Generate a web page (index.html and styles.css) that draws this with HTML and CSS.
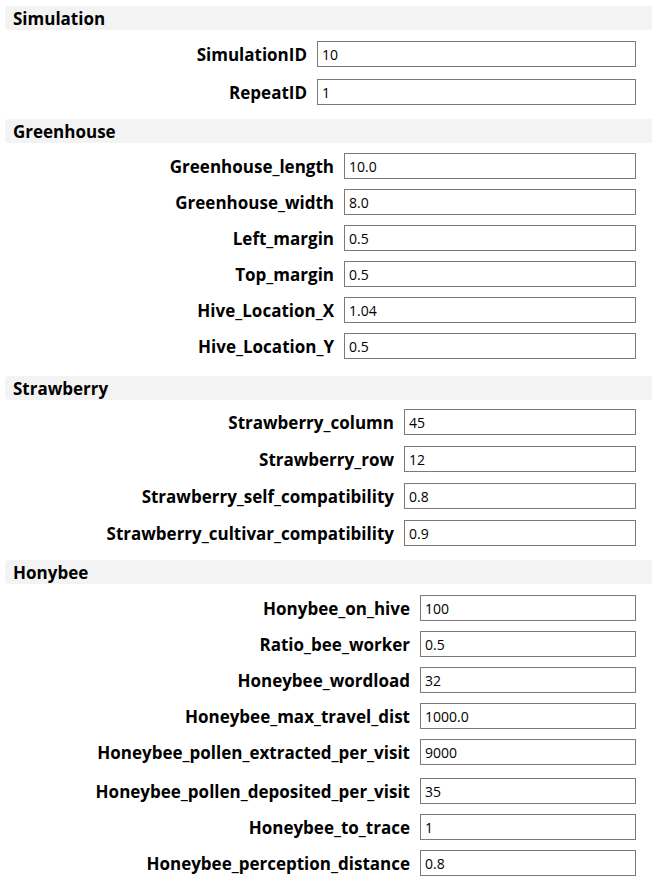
FILE: index.html
```html
<!DOCTYPE html>
<html>
<head>
<meta charset="utf-8">
<link rel="stylesheet" href="styles.css">
</head>
<body>
<div class="form">
  <section class="sec sec-sim">
    <div class="sec-head">Simulation</div>
    <div class="grid">
      <label class="lbl">SimulationID</label><input class="fld" value="10">
      <label class="lbl">RepeatID</label><input class="fld" value="1">
    </div>
  </section>
  <section class="sec sec-gh">
    <div class="sec-head">Greenhouse</div>
    <div class="grid">
      <label class="lbl">Greenhouse_length</label><input class="fld" value="10.0">
      <label class="lbl">Greenhouse_width</label><input class="fld" value="8.0">
      <label class="lbl">Left_margin</label><input class="fld" value="0.5">
      <label class="lbl">Top_margin</label><input class="fld" value="0.5">
      <label class="lbl">Hive_Location_X</label><input class="fld" value="1.04">
      <label class="lbl">Hive_Location_Y</label><input class="fld" value="0.5">
    </div>
  </section>
  <section class="sec sec-sb">
    <div class="sec-head">Strawberry</div>
    <div class="grid">
      <label class="lbl">Strawberry_column</label><input class="fld" value="45">
      <label class="lbl">Strawberry_row</label><input class="fld" value="12">
      <label class="lbl">Strawberry_self_compatibility</label><input class="fld" value="0.8">
      <label class="lbl">Strawberry_cultivar_compatibility</label><input class="fld" value="0.9">
    </div>
  </section>
  <section class="sec sec-hb">
    <div class="sec-head">Honybee</div>
    <div class="grid">
      <label class="lbl">Honybee_on_hive</label><input class="fld" value="100">
      <label class="lbl">Ratio_bee_worker</label><input class="fld" value="0.5">
      <label class="lbl">Honeybee_wordload</label><input class="fld" value="32">
      <label class="lbl">Honeybee_max_travel_dist</label><input class="fld" value="1000.0">
      <label class="lbl">Honeybee_pollen_extracted_per_visit</label><input class="fld" value="9000">
      <label class="lbl push">Honeybee_pollen_deposited_per_visit</label><input class="fld push" value="35">
      <label class="lbl">Honeybee_to_trace</label><input class="fld" value="1">
      <label class="lbl">Honeybee_perception_distance</label><input class="fld" value="0.8">
    </div>
  </section>
</div>
</body>
</html>
```

FILE: styles.css
```css
html, body {
  margin: 0;
  padding: 0;
  background: #ffffff;
}

body {
  font-family: "Open Sans", "Noto Sans", "DejaVu Sans", sans-serif;
  color: #000;
}

.form {
  padding: 6px 0 0 5px;
}

.sec-head {
  height: 24px;
  line-height: 26px;
  background: #f3f3f3;
  border-radius: 4px 0 0 4px;
  padding-left: 8px;
  font-weight: 700;
  font-size: 17px;
}

.grid {
  display: grid;
  column-gap: 10px;
  align-items: center;
  padding-right: 16px;
}

.lbl {
  text-align: right;
  font-weight: 700;
  font-size: 17px;
  white-space: nowrap;
  line-height: 26px;
  position: relative;
  top: 1px;
}

.fld {
  box-sizing: border-box;
  height: 26px;
  margin: 0;
  border: 1px solid #7a7a7a;
  border-radius: 0;
  padding: 0 4px;
  font-family: "Open Sans", "Noto Sans", sans-serif;
  font-size: 14px;
  color: #000;
  background: #fff;
  outline: none;
  width: 100%;
}

.sec-sim .grid {
  grid-template-columns: 1fr 319px;
  row-gap: 12px;
  margin-top: 11px;
  margin-bottom: 14px;
}

.sec-gh .grid {
  grid-template-columns: 1fr 292px;
  row-gap: 10px;
  margin-top: 10px;
  margin-bottom: 17px;
}

.sec-sb .grid {
  grid-template-columns: 1fr 232px;
  row-gap: 11px;
  margin-top: 9px;
  margin-bottom: 14px;
}

.sec-hb .grid {
  grid-template-columns: 1fr 216px;
  row-gap: 10px;
  margin-top: 11px;
}

.push {
  margin-top: 3px;
}
```
